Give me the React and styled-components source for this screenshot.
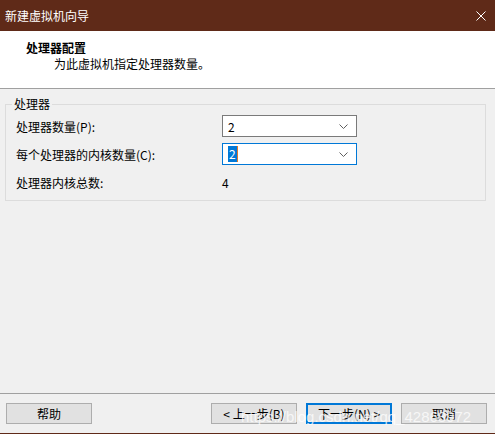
import React from 'react';
import styled, { createGlobalStyle } from 'styled-components';

const GlobalStyle = createGlobalStyle`
  html, body {
    margin: 0;
    padding: 0;
    background: #f0f0f0;
  }
  body {
    font-family: "Noto Sans CJK SC", "Liberation Sans", sans-serif;
    font-size: 12px;
    color: #000;
  }
`;

const Window = styled.div`
  position: relative;
  width: 495px;
  height: 434px;
  box-sizing: border-box;
  display: flex;
  flex-direction: column;
  background: #f0f0f0;
  border-bottom: 1px solid #5f2a18;
  overflow: hidden;
`;

const TitleBar = styled.div`
  height: 31px;
  flex: none;
  display: flex;
  align-items: center;
  justify-content: space-between;
  padding: 0 9px 0 5px;
  background: #5f2a18;
  color: #fff;
  font-size: 12px;
`;

const CloseIcon = styled.svg`
  width: 10px;
  height: 10px;
  display: block;
`;

const Header = styled.div`
  height: 57px;
  flex: none;
  box-sizing: content-box;
  background: #fff;
  border-bottom: 1px solid #a0a0a0;
  padding-top: 0;
  display: flex;
  flex-direction: column;
  padding-left: 26px;
  padding-top: 9px;
  box-sizing: border-box;
  height: 58px;
`;

const HeaderTitle = styled.div`
  font-weight: 700;
  line-height: 16px;
`;

const HeaderText = styled.div`
  line-height: 16px;
  padding-left: 28px;
`;

const Content = styled.div`
  flex: 1;
  padding: 8px 9px 0 5px;
`;

const Group = styled.fieldset`
  margin: 0;
  padding: 0 6px 7px 6px;
  border: 1px solid #dcdcdc;
  min-width: 0;
`;

const Legend = styled.legend`
  padding: 0 2px;
  line-height: 14px;
`;

const Rows = styled.div`
  display: flex;
  flex-direction: column;
  gap: 6px;
  padding: 4px 0 0 4px;
`;

const Row = styled.div`
  display: grid;
  grid-template-columns: 206px 135px;
  align-items: center;
  height: 22px;
`;

const Combo = styled.div`
  height: 22px;
  box-sizing: border-box;
  display: flex;
  align-items: center;
  justify-content: space-between;
  padding: 0 8px 0 5px;
  background: #fff;
  border: 1px solid ${p => (p.$focused ? '#0078d7' : '#7a7a7a')};
`;

const Selected = styled.span`
  background: #0078d7;
  color: #fff;
  padding: 0 1px;
  line-height: 16px;
  border-right: 1px solid #e0782a;
`;

const Value = styled.span`
  padding-left: 0;
`;

const Footer = styled.div`
  flex: none;
  border-top: 1px solid #a0a0a0;
  padding: 9px 8px 9px 6px;
  display: flex;
  justify-content: space-between;
`;

const ButtonGroup = styled.div`
  display: flex;
  gap: 9px;
`;

const Button = styled.button`
  width: 86px;
  height: 21px;
  box-sizing: border-box;
  padding: 0;
  margin: 0;
  background: #e1e1e1;
  border: ${p => (p.$primary ? '2px solid #0078d7' : '1px solid #adadad')};
  font-family: "Noto Sans CJK SC", "Liberation Sans", sans-serif;
  font-size: 12px;
  color: #000;
  line-height: 17px;
`;

const Watermark = styled.div`
  position: absolute;
  left: 241px;
  top: 408px;
  font-family: "Liberation Sans", Arial, sans-serif;
  font-size: 15px;
  line-height: 18px;
  color: rgba(255, 255, 255, 0.75);
  pointer-events: none;
  white-space: nowrap;
`;

const Chevron = () => (
  <svg width="9" height="5" viewBox="0 0 9 5">
    <path d="M0.5 0.5 L4.5 4.5 L8.5 0.5" fill="none" stroke="#606060" strokeWidth="1" />
  </svg>
);

export default function App() {
  return (
    <>
      <GlobalStyle />
      <Window>
        <TitleBar>
          <span>新建虚拟机向导</span>
          <CloseIcon viewBox="0 0 10 10">
            <path d="M0.5 0.5 L9.5 9.5 M9.5 0.5 L0.5 9.5" stroke="#fff" strokeWidth="1" />
          </CloseIcon>
        </TitleBar>
        <Header>
          <HeaderTitle>处理器配置</HeaderTitle>
          <HeaderText>为此虚拟机指定处理器数量。</HeaderText>
        </Header>
        <Content>
          <Group>
            <Legend>处理器</Legend>
            <Rows>
              <Row>
                <span>处理器数量(P):</span>
                <Combo>
                  <Value>2</Value>
                  <Chevron />
                </Combo>
              </Row>
              <Row>
                <span>每个处理器的内核数量(C):</span>
                <Combo $focused>
                  <Selected>2</Selected>
                  <Chevron />
                </Combo>
              </Row>
              <Row>
                <span>处理器内核总数:</span>
                <Value>4</Value>
              </Row>
            </Rows>
          </Group>
        </Content>
        <Footer>
          <Button>帮助</Button>
          <ButtonGroup>
            <Button>&lt; 上一步(B)</Button>
            <Button $primary>下一步(N) &gt;</Button>
            <Button>取消</Button>
          </ButtonGroup>
        </Footer>
        <Watermark>https://blog.csdn.net/qq_42868972</Watermark>
      </Window>
    </>
  );
}
